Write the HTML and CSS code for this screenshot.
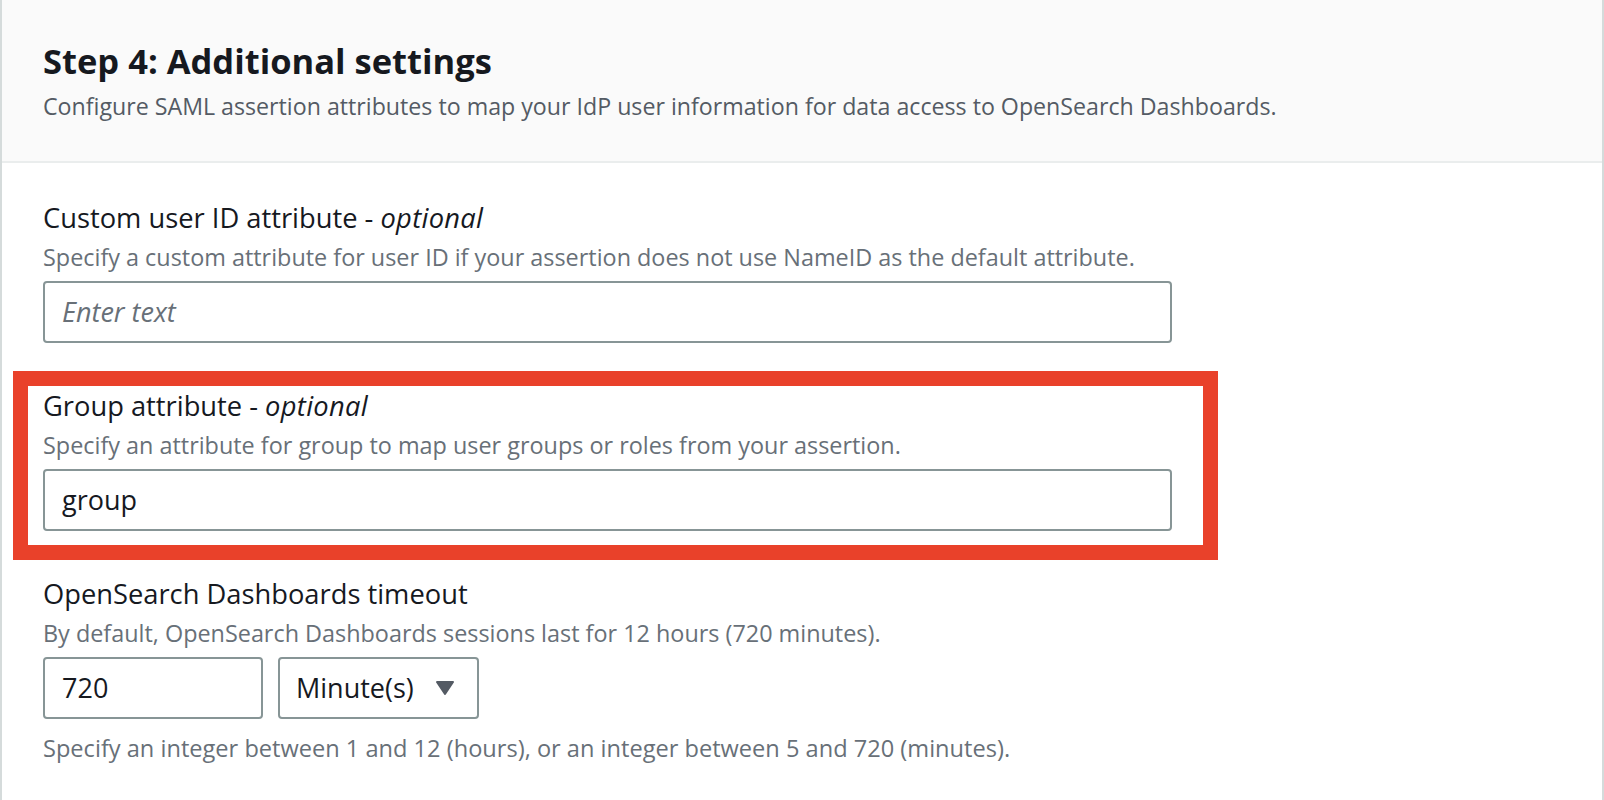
FILE: index.html
```html
<!DOCTYPE html>
<html lang="en">
<head>
<meta charset="utf-8">
<title>Step 4: Additional settings</title>
<link rel="stylesheet" href="styles.css">
</head>
<body>
<div class="container">
  <div class="header">
    <h2 class="title">Step 4: Additional settings</h2>
    <p class="header-desc">Configure SAML assertion attributes to map your IdP user information for data access to OpenSearch Dashboards.</p>
  </div>
  <div class="form">
    <div class="field">
      <div class="label">Custom user ID attribute - <i>optional</i></div>
      <div class="desc">Specify a custom attribute for user ID if your assertion does not use NameID as the default attribute.</div>
      <div class="input placeholder">Enter text</div>
    </div>
    <div class="field highlighted">
      <div class="label">Group attribute - <i>optional</i></div>
      <div class="desc">Specify an attribute for group to map user groups or roles from your assertion.</div>
      <div class="input">group</div>
      <span class="annotation"></span>
    </div>
    <div class="field">
      <div class="label">OpenSearch Dashboards timeout</div>
      <div class="desc">By default, OpenSearch Dashboards sessions last for 12 hours (720 minutes).</div>
      <div class="row">
        <div class="input small">720</div>
        <div class="select">
          <span>Minute(s)</span>
          <svg class="caret" width="20" height="16" viewBox="0 0 20 16"><path d="M2 2 H18 L10 14 Z" fill="#545b64" stroke="#545b64" stroke-width="2" stroke-linejoin="round"/></svg>
        </div>
      </div>
      <div class="hint">Specify an integer between 1 and 12 (hours), or an integer between 5 and 720 (minutes).</div>
    </div>
  </div>
</div>
</body>
</html>
```

FILE: styles.css
```css
* { box-sizing: border-box; }
html, body { margin: 0; padding: 0; background: #ffffff; }
body {
  font-family: "Open Sans", "Noto Sans", sans-serif;
  color: #16191f;
  height: 800px;
  overflow: hidden;
}
.container {
  border-left: 2px solid #d5dbdb;
  border-right: 2px solid #d5dbdb;
  min-height: 800px;
}
.header {
  background: #fafafa;
  border-bottom: 2px solid #eaeded;
  height: 163px;
  padding: 39px 41px 0;
}
.title {
  margin: 0;
  font-size: 34.5px;
  line-height: 44px;
  font-weight: 700;
  color: #16191f;
}
.header-desc {
  margin: 7px 0 0;
  font-size: 23.2px;
  line-height: 32px;
  color: #545b64;
}
.form {
  padding: 35px 41px 0;
}
.field { margin-bottom: 43px; }
.field.highlighted { position: relative; }
.label {
  font-size: 27.3px;
  line-height: 40px;
  color: #16191f;
}
.label i { letter-spacing: 0.3px; }
.desc {
  margin-top: 3px;
  font-size: 23.4px;
  line-height: 32px;
  color: #687078;
}
.input {
  margin-top: 8px;
  width: 1129px;
  height: 62px;
  border: 2px solid #879596;
  border-radius: 4px;
  padding: 0 17px;
  font-size: 27px;
  line-height: 58px;
  color: #16191f;
}
.input.placeholder {
  font-style: italic;
  color: #687078;
}
.annotation {
  position: absolute;
  top: -15px;
  left: -30px;
  width: 1205px;
  height: 189px;
  border: 15px solid #e9412a;
}
.row {
  display: flex;
  gap: 15px;
  margin-top: 8px;
}
.row .input { margin-top: 0; }
.input.small { width: 220px; }
.select {
  width: 201px;
  height: 62px;
  border: 2px solid #879596;
  border-radius: 4px;
  padding: 0 22px 0 16px;
  display: flex;
  align-items: center;
  justify-content: space-between;
  font-size: 27px;
  line-height: 58px;
  color: #16191f;
}
.caret { display: block; }
.hint {
  margin-top: 13px;
  font-size: 23.6px;
  line-height: 32px;
  color: #687078;
}
```
